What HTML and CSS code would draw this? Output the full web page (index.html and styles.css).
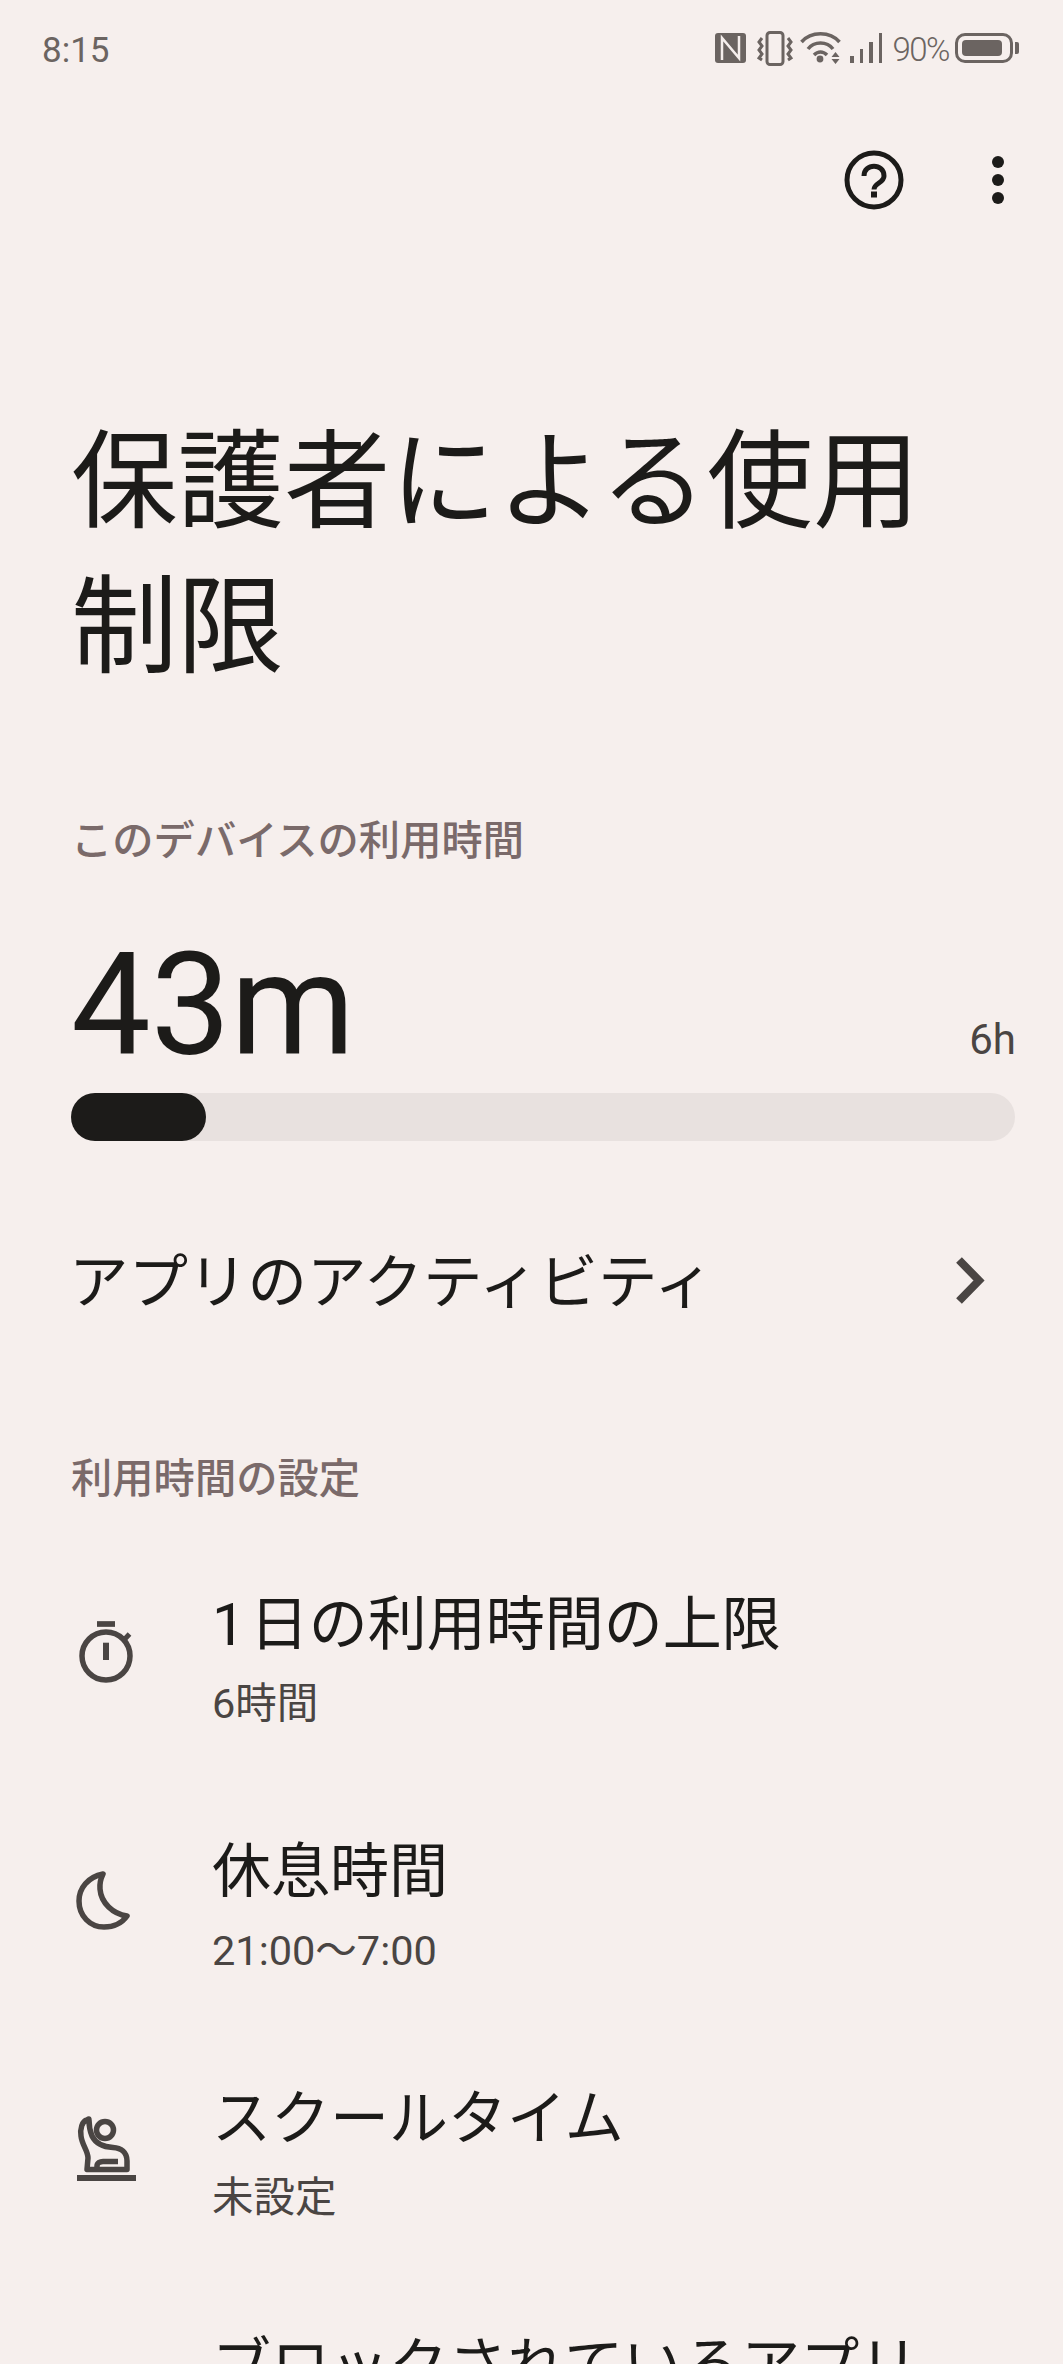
FILE: index.html
```html
<!DOCTYPE html>
<html lang="ja">
<head>
  <title>保護者による使用制限</title>
  <meta charset="utf-8">
  <meta name="viewport" content="width=device-width, initial-scale=1">
  <link rel="stylesheet" href="styles.css">
</head>
<body>
  <div class="status-bar">
    <span class="status-time">8:15</span>
    <div class="status-icons">
      <svg class="nfc-icon" width="31" height="30" viewBox="0 0 31 30">
        <rect width="31" height="30" rx="3" fill="#6b6461"/>
        <path fill="none" stroke="#f6efed" stroke-width="2.5" d="M7 27V5l17 20V3"/>
      </svg>
      <svg class="vibrate-icon" width="36" height="35" viewBox="0 0 36 35" fill="none" stroke="#6b6461">
        <rect x="10" y="1.5" width="16" height="32" rx="3" stroke-width="3"/>
        <path stroke-width="3" d="M5 7L2 11l3 4-3 4 3 4-3 4 3 2M31 7l3 4-3 4 3 4-3 4 3 4-3 2"/>
      </svg>
      <svg class="wifi-icon" width="41" height="32" viewBox="0 0 41 32" fill="none" stroke="#6b6461" stroke-width="3.5">
        <path d="M1.500 10C11-1 30-1 39.500 10M8 17c6-8 19-8 25 0M14 23c4-4 9-4 13 0"/>
        <circle cx="20" cy="27" r="3.400" fill="#6b6461" stroke="none"/>
        <path fill="#6b6461" stroke="none" d="M35.500 20l4 5h-8zM31.500 27h8l-4 5z"/>
      </svg>
      <div class="signal">
        <span class="signal-bar signal-bar-1"></span>
        <span class="signal-bar signal-bar-2"></span>
        <span class="signal-bar signal-bar-3"></span>
        <span class="signal-bar signal-bar-4"></span>
      </div>
      <span class="status-battery">90%</span>
      <div class="battery">
        <div class="battery-body"><div class="battery-level"></div></div>
        <div class="battery-tip"></div>
      </div>
    </div>
  </div>

  <div class="toolbar">
    <svg class="help-icon" width="60" height="60" viewBox="0 0 60 60">
      <circle cx="30" cy="30" r="27" fill="none" stroke="#1c1b19" stroke-width="5"/>
      <path fill="none" stroke="#1c1b19" stroke-width="5" d="M20 26C20 13 40 13 40 26c0 7-10 7-10 13.500"/>
      <rect x="27" y="41.500" width="6" height="6" fill="#1c1b19"/>
    </svg>
    <div class="more-icon">
      <span class="more-dot"></span>
      <span class="more-dot"></span>
      <span class="more-dot"></span>
    </div>
  </div>

  <h1 class="page-title">保護者による使用制限</h1>

  <p class="section-title section-title-usage">このデバイスの利用時間</p>

  <div class="usage">
    <span class="usage-value">43m</span>
    <span class="usage-limit">6h</span>
  </div>
  <div class="progress"><div class="progress-value"></div></div>

  <div class="activity">
    <span class="activity-title">アプリのアクティビティ</span>
    <svg class="activity-arrow" width="30" height="47" viewBox="0 0 30 47">
      <path fill="none" stroke="#4a4543" stroke-width="8" d="M4 3l20 20.500L4 44"/>
    </svg>
  </div>

  <p class="section-title section-title-settings">利用時間の設定</p>

  <ul class="settings">
    <li class="setting">
      <svg class="setting-icon" width="62" height="70" viewBox="0 0 62 70" fill="none" stroke="#4a4543" stroke-width="5.500">
        <path stroke-width="5.700" d="M22 6h18"/>
        <circle cx="31" cy="38" r="24"/>
        <path stroke-width="6" d="M31 24.700V42"/>
        <path stroke-width="5" d="M48 23l6.500-7"/>
      </svg>
      <div class="setting-text">
        <p class="setting-title">1 日の利用時間の上限</p>
        <p class="setting-value">6時間</p>
      </div>
    </li>
    <li class="setting">
      <svg class="setting-icon" width="62" height="70" viewBox="0 0 62 70" fill="none" stroke="#4a4543" stroke-width="5.500">
        <path stroke-linejoin="round" d="M28 9C13 12 4 23 4 36c0 15 11 26 25 26 10 0 18-4 23-11C38 49 26 38 25 24c-.5-6 1-11 3-15z"/>
      </svg>
      <div class="setting-text">
        <p class="setting-title">休息時間</p>
        <p class="setting-value">21:00～7:00</p>
      </div>
    </li>
    <li class="setting">
      <svg class="setting-icon" width="62" height="70" viewBox="0 0 62 70" fill="none" stroke="#4a4543" stroke-width="5.500">
        <circle cx="30" cy="18" r="8.500"/>
        <path stroke-linejoin="round" d="M12 8C7 9 5 17 6 24c1 9 7 15 7 22l-1 11.500h40V49c0-9-6-13-14-13.500C28 35 21 32 17 24c-2.500-6-3-11-3-16 0-2-1-.5-2 0z"/>
        <path d="M22 57v-3c0-3 3-4.500 6-4.500h15"/>
        <path stroke-width="6" d="M2 66h59"/>
      </svg>
      <div class="setting-text">
        <p class="setting-title">スクールタイム</p>
        <p class="setting-value">未設定</p>
      </div>
    </li>
    <li class="setting">
      <div class="setting-text">
        <p class="setting-title">ブロックされているアプリ</p>
      </div>
    </li>
  </ul>
</body>
</html>
```

FILE: styles.css
```css
*, *::before, *::after {
  margin: 0;
  padding: 0;
  box-sizing: border-box;
}

html, body {
  height: 2364px;
  overflow: hidden;
}

body {
  background-color: #F6EFED;
  color: #1C1B19;
  font-family: "Roboto", "Noto Sans CJK JP", sans-serif;
}

.status-bar {
  display: flex;
  justify-content: space-between;
  align-items: center;
  height: 66px;
  margin-top: 15px;
  padding: 0 44px 0 42px;
  color: #6B6461;
}

.status-time {
  margin-top: 4px;
  font-size: 35px;
  line-height: 1;
}

.status-icons {
  display: flex;
  align-items: center;
}

.vibrate-icon {
  margin-left: 11px;
}

.wifi-icon {
  margin-left: 7px;
}

.signal {
  display: flex;
  align-items: flex-end;
  gap: 6px;
  height: 30px;
  margin-left: 9px;
}

.signal-bar {
  width: 3.5px;
  background-color: #6B6461;
}

.signal-bar-1 {
  height: 7px;
}

.signal-bar-2 {
  height: 14px;
}

.signal-bar-3 {
  height: 21px;
}

.signal-bar-4 {
  height: 30px;
}

.status-battery {
  margin-top: 3px;
  margin-left: 10px;
  font-size: 33px;
  font-weight: 300;
  letter-spacing: -1.5px;
  line-height: 1;
}

.battery {
  display: flex;
  align-items: center;
  margin-left: 6px;
}

.battery-body {
  width: 58px;
  height: 30px;
  padding: 4px;
  border: 3px solid #6B6461;
  border-radius: 10px;
}

.battery-level {
  width: 92%;
  height: 100%;
  border-radius: 4px;
  background-color: #6B6461;
}

.battery-tip {
  width: 4px;
  height: 12px;
  margin-left: 2px;
  border-radius: 0 2px 2px 0;
  background-color: #6B6461;
}

.toolbar {
  display: flex;
  justify-content: flex-end;
  align-items: center;
  gap: 88px;
  height: 60px;
  margin-top: 69px;
  padding-right: 59px;
}

.more-icon {
  display: flex;
  flex-direction: column;
  gap: 6px;
}

.more-dot {
  width: 12px;
  height: 12px;
  border-radius: 50%;
  background-color: #1C1B19;
}

.page-title {
  width: 900px;
  margin-top: 200px;
  margin-left: 71px;
  font-size: 106.5px;
  font-weight: 400;
  line-height: 145px;
}

.section-title {
  font-size: 41.3px;
  font-weight: 500;
  line-height: 56px;
  color: #7A6A6A;
}

.section-title-usage {
  margin-top: 113px;
  margin-left: 71px;
}

.usage {
  display: flex;
  justify-content: space-between;
  align-items: baseline;
  margin: 67px 47px 0 71px;
}

.usage-value {
  font-size: 142px;
  line-height: 140px;
}

.usage-limit {
  font-size: 42px;
  color: #4A4543;
}

.progress {
  height: 48px;
  margin: 17px 48px 0 71px;
  border-radius: 24px;
  background-color: #E8E1DF;
}

.progress-value {
  width: 135px;
  height: 100%;
  border-radius: 24px;
  background-color: #1C1B19;
}

.activity {
  display: flex;
  justify-content: space-between;
  align-items: center;
  margin: 101px 78px 0 69px;
}

.activity-title {
  font-size: 59.5px;
  line-height: 82px;
}

.activity-arrow {
  margin-bottom: 6px;
}

.section-title-settings {
  margin-top: 127px;
  margin-left: 71px;
}

.settings {
  list-style: none;
  margin-top: 78px;
}

.setting {
  display: grid;
  grid-template-columns: 62px 1fr;
  column-gap: 75px;
  align-items: start;
  height: 247px;
  padding-left: 75px;
}

.setting-icon {
  margin-top: 33px;
}

.setting-text {
  grid-column: 2;
}

.setting-title {
  font-size: 59px;
  line-height: 80px;
  word-spacing: -10px;
}

.setting-value {
  margin-top: 11px;
  font-size: 41.5px;
  line-height: 56px;
  color: #4A4543;
}
```
